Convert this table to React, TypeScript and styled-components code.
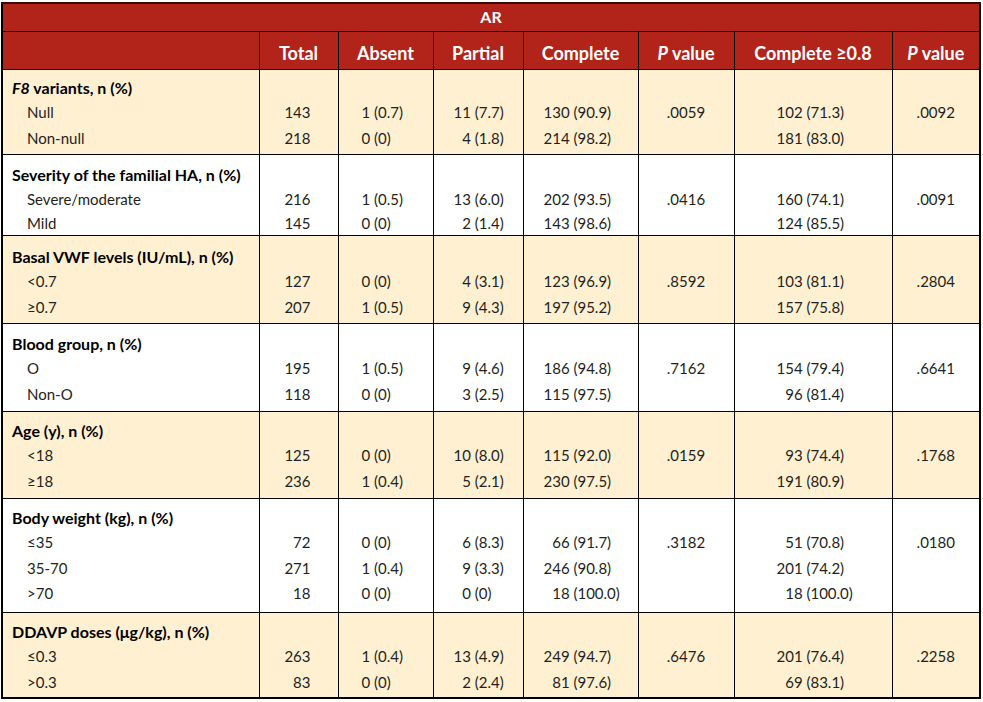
import {FC, ReactNode} from 'react'
import styled, {createGlobalStyle} from 'styled-components'

const COLORS = {
    red: '#b2241a',
    cream: '#fff0d1',
    white: '#ffffff',
    line: '#000000',
    text: '#231f20',
}

type Group = {
    label: ReactNode
    shaded: boolean
    height: number
    padTop: number
    lineH?: number
    rows: string[][]
    p1: string
    p2: string
}

const groups: Group[] = [
    {
        label: <><i>F8</i> variants, n (%)</>,
        shaded: true, height: 85, padTop: 5,
        rows: [
            ['Null', '143', '1 (0.7)', '11 (7.7)', '130 (90.9)', '102 (71.3)'],
            ['Non-null', '218', '0 (0)', '4 (1.8)', '214 (98.2)', '181 (83.0)'],
        ],
        p1: '.0059', p2: '.0092',
    },
    {
        label: 'Severity of the familial HA, n (%)',
        shaded: false, height: 80, padTop: 8, lineH: 24,
        rows: [
            ['Severe/moderate', '216', '1 (0.5)', '13 (6.0)', '202 (93.5)', '160 (74.1)'],
            ['Mild', '145', '0 (0)', '2 (1.4)', '143 (98.6)', '124 (85.5)'],
        ],
        p1: '.0416', p2: '.0091',
    },
    {
        label: 'Basal VWF levels (IU/mL), n (%)',
        shaded: true, height: 88, padTop: 8,
        rows: [
            ['<0.7', '127', '0 (0)', '4 (3.1)', '123 (96.9)', '103 (81.1)'],
            ['≥0.7', '207', '1 (0.5)', '9 (4.3)', '197 (95.2)', '157 (75.8)'],
        ],
        p1: '.8592', p2: '.2804',
    },
    {
        label: 'Blood group, n (%)',
        shaded: false, height: 88, padTop: 7,
        rows: [
            ['O', '195', '1 (0.5)', '9 (4.6)', '186 (94.8)', '154 (79.4)'],
            ['Non-O', '118', '0 (0)', '3 (2.5)', '115 (97.5)', '96 (81.4)'],
        ],
        p1: '.7162', p2: '.6641',
    },
    {
        label: 'Age (y), n (%)',
        shaded: true, height: 87, padTop: 6,
        rows: [
            ['<18', '125', '0 (0)', '10 (8.0)', '115 (92.0)', '93 (74.4)'],
            ['≥18', '236', '1 (0.4)', '5 (2.1)', '230 (97.5)', '191 (80.9)'],
        ],
        p1: '.0159', p2: '.1768',
    },
    {
        label: 'Body weight (kg), n (%)',
        shaded: false, height: 114, padTop: 6,
        rows: [
            ['≤35', '72', '0 (0)', '6 (8.3)', '66 (91.7)', '51 (70.8)'],
            ['35-70', '271', '1 (0.4)', '9 (3.3)', '246 (90.8)', '201 (74.2)'],
            ['>70', '18', '0 (0)', '0 (0)', '18 (100.0)', '18 (100.0)'],
        ],
        p1: '.3182', p2: '.0180',
    },
    {
        label: 'DDAVP doses (μg/kg), n (%)',
        shaded: true, height: 86, padTop: 6,
        rows: [
            ['≤0.3', '263', '1 (0.4)', '13 (4.9)', '249 (94.7)', '201 (76.4)'],
            ['>0.3', '83', '0 (0)', '2 (2.4)', '81 (97.6)', '69 (83.1)'],
        ],
        p1: '.6476', p2: '.2258',
    },
]

// where the count column sits in each cell, and how many digits it is padded to
const split = {
    absent: {pad: 23, digits: 1},
    partial: {pad: 20, digits: 2},
    complete: {pad: 20, digits: 3},
    complete08: {pad: 42, digits: 3},
}

const widths = [257, 79, 95, 90, 115, 96, 158, 88]

const Count: FC<{value: string; digits: number}> = ({value, digits}) => {
    const [num, ...rest] = value.split(' ')
    return (
        <Line>
            <Num $digits={digits}>{num}</Num>&nbsp;{rest.join(' ')}
        </Line>
    )
}

const App: FC = () => {
    return (
        <>
            <GlobalStyle/>
            <Table>
                <colgroup>
                    {widths.map((w, i) => <col key={i} style={{width: w}}/>)}
                </colgroup>
                <thead>
                <HeadRow $height={28}>
                    <TitleCell colSpan={8}>AR</TitleCell>
                </HeadRow>
                <HeadRow $height={38}>
                    <HeadCell/>
                    <HeadCell>Total</HeadCell>
                    <HeadCell>Absent</HeadCell>
                    <HeadCell>Partial</HeadCell>
                    <HeadCell>Complete</HeadCell>
                    <HeadCell><i>P</i> value</HeadCell>
                    <HeadCell>Complete ≥0.8</HeadCell>
                    <HeadCell><i>P</i> value</HeadCell>
                </HeadRow>
                </thead>
                <tbody>
                {groups.map((g, gi) => (
                    <GroupRow key={gi} $shaded={g.shaded} $height={g.height} $lineH={g.lineH ?? 25.5}>
                        <LabelCell $padTop={g.padTop}>
                            <GroupTitle>{g.label}</GroupTitle>
                            {g.rows.map(r => <SubLabel key={r[0]}>{r[0]}</SubLabel>)}
                        </LabelCell>
                        <TotalCell $padTop={g.padTop}>
                            <Line/>
                            {g.rows.map(r => <Line key={r[0]}>{r[1]}</Line>)}
                        </TotalCell>
                        <CountCell $padTop={g.padTop} $pad={split.absent.pad}>
                            <Line/>
                            {g.rows.map(r => <Count key={r[0]} value={r[2]} digits={split.absent.digits}/>)}
                        </CountCell>
                        <CountCell $padTop={g.padTop} $pad={split.partial.pad}>
                            <Line/>
                            {g.rows.map(r => <Count key={r[0]} value={r[3]} digits={split.partial.digits}/>)}
                        </CountCell>
                        <CountCell $padTop={g.padTop} $pad={split.complete.pad}>
                            <Line/>
                            {g.rows.map(r => <Count key={r[0]} value={r[4]} digits={split.complete.digits}/>)}
                        </CountCell>
                        <PCell $padTop={g.padTop}>
                            <Line/>
                            <Line>{g.p1}</Line>
                        </PCell>
                        <CountCell $padTop={g.padTop} $pad={split.complete08.pad}>
                            <Line/>
                            {g.rows.map(r => <Count key={r[0]} value={r[5]} digits={split.complete08.digits}/>)}
                        </CountCell>
                        <PCell $padTop={g.padTop}>
                            <Line/>
                            <Line>{g.p2}</Line>
                        </PCell>
                    </GroupRow>
                ))}
                </tbody>
            </Table>
        </>
    )
}


const GlobalStyle = createGlobalStyle`
  html, body {
    margin: 0;
    padding: 0;
    background: ${COLORS.white};
  }
  body {
    font-family: Lato, "Open Sans", "Liberation Sans", sans-serif;
    color: ${COLORS.text};
  }
`

const Table = styled.table`
  margin: 2px 0 0 1px;
  width: 980px;
  table-layout: fixed;
  border-collapse: collapse;
  border: 2px solid ${COLORS.line};
  font-size: 15px;
  font-variant-numeric: tabular-nums;
`

const HeadRow = styled.tr<{$height: number}>`
  height: ${p => p.$height}px;
  background: ${COLORS.red};
`

const TitleCell = styled.th`
  padding: 0;
  color: ${COLORS.white};
  font-size: 16px;
  font-weight: 700;
  line-height: 20px;
  text-align: center;
  border: 1px solid ${COLORS.line};
  border-top: 2px solid #3a0a06;
`

const HeadCell = styled.th`
  padding: 6px 2px 0;
  color: ${COLORS.white};
  font-size: 18px;
  font-weight: 700;
  line-height: 22px;
  text-align: center;
  white-space: nowrap;
  border: 1px solid ${COLORS.line};

  i {
    font-style: italic;
  }
`

const GroupRow = styled.tr<{$shaded: boolean; $height: number; $lineH: number}>`
  --line-h: ${p => p.$lineH}px;
  height: ${p => p.$height}px;
  background: ${p => p.$shaded ? COLORS.cream : COLORS.white};
`

const BodyCell = styled.td<{$padTop: number}>`
  vertical-align: top;
  padding: ${p => p.$padTop}px 0 0;
  border-left: 1px solid ${COLORS.line};
  border-right: 1px solid ${COLORS.line};
  border-bottom: 1px solid ${COLORS.line};
`

const LabelCell = styled(BodyCell)`
  padding-left: 9px;
`

const TotalCell = styled(BodyCell)`
  text-align: right;
  padding-right: 27px;
`

const CountCell = styled(BodyCell)<{$pad: number}>`
  text-align: left;
  padding-left: ${p => p.$pad}px;
`

const PCell = styled(BodyCell)`
  text-align: center;
`

const Line = styled.div`
  height: var(--line-h);
  line-height: var(--line-h);
  white-space: nowrap;
`

const GroupTitle = styled(Line)`
  font-size: 16px;
  font-weight: 700;
  color: #000;
`

const SubLabel = styled(Line)`
  padding-left: 15px;
`

const Num = styled.span<{$digits: number}>`
  display: inline-block;
  min-width: ${p => p.$digits}ch;
  text-align: right;
`

export default App
